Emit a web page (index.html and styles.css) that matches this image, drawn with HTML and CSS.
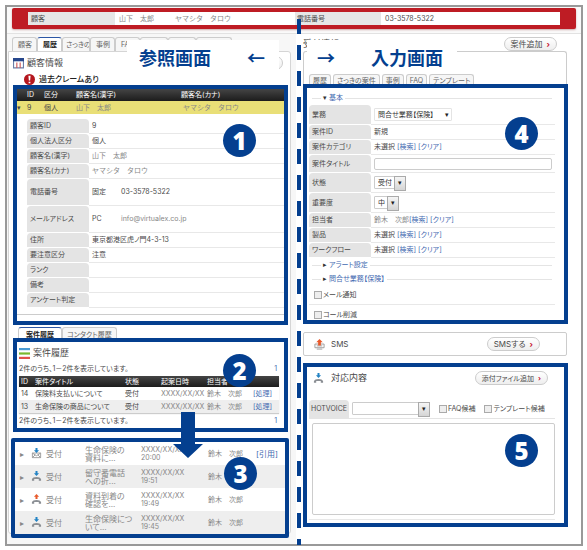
FILE: index.html
```html
<!DOCTYPE html>
<html lang="ja">
<head>
<meta charset="UTF-8">
<meta name="viewport" content="width=device-width, initial-scale=1.0">
<title>顧客対応画面</title>
<link rel="stylesheet" href="styles.css">
</head>
<body>
<!-- 共通アイコン -->
<svg class="defs" width="0" height="0">
  <symbol id="ico-phone" viewBox="0 0 12 12">
    <path class="handset" d="M1 10.500V9Q2 6.500 6 6.500T11 9v1.500H8.500V8.800h-5v1.700z"/>
    <path class="arrow" d="M4.900 0h2.200v2.500h1.700L6 5.500 3.200 2.500h1.700z"/>
  </symbol>
  <symbol id="ico-phone-out" viewBox="0 0 12 12">
    <path class="handset" d="M1 10.500V9Q2 6.500 6 6.500T11 9v1.500H8.500V8.800h-5v1.700z"/>
    <path class="arrow out" d="M4.900 5.500h2.200V3h1.700L6 0 3.200 3h1.700z"/>
  </symbol>
  <symbol id="ico-mail" viewBox="0 0 12 12">
    <path class="line" d="M1.500 5.500h9v5h-9zM1.500 5.500L6 8.500l4.500-3M1.500 10.500L4.500 7.500M10.500 10.500L7.500 7.500"/>
    <path class="arrow" d="M4.900 0h2.200v2.500h1.700L6 5.500 3.200 2.500h1.700z"/>
  </symbol>
  <symbol id="ico-sms" viewBox="0 0 12 12">
    <path class="line" d="M1 5.500h10v4H1zM3 7.500h6M3 11h6"/>
    <path class="arrow out" d="M4.500 7h3V3.500h2L6 0 2.500 3.500h2z"/>
  </symbol>
</svg>

<div class="frame">
  <header class="topbar">
    <dl class="caller">
      <dt>顧客</dt>
      <dd class="light">山下　太郎　　　ヤマシタ　タロウ</dd>
      <dt class="tel">電話番号</dt>
      <dd>03-3578-5322</dd>
    </dl>
  </header>

  <main class="columns">
    <!-- 参照画面 -->
    <section class="left">
      <h2 class="screen-title"><span>参照画面</span><span>←</span></h2>
      <nav class="tabs main-tabs">
        <a href="#">顧客</a>
        <a href="#" class="active">履歴</a>
        <a href="#">さっきの</a>
        <a href="#">事例</a>
        <a href="#">FAQ</a>
        <a href="#"></a>
        <a href="#"></a>
        <a href="#" class="wide"></a>
      </nav>
      <div class="panel">
        <div class="panel-head">
          <svg class="icon" viewBox="0 0 10 10"><path fill="#fff" stroke="#6b7fa8" d="M.5.500h9v8.500h-9z"/><path fill="#27478c" d="M0 0h10v3H0z"/><path stroke="#c55" d="M3.500 4v5M6.500 4v5"/></svg>
          <h3>顧客情報</h3>
          <button type="button" class="pill" aria-label="編集"></button>
        </div>
        <p class="warn">
          <svg class="icon" viewBox="0 0 10 10"><circle cx="5" cy="5" r="5" fill="#b5171e"/><path fill="#fff" d="M4 1.500h2L5.600 6H4.400zM4.200 7h1.600v1.500H4.200z"/></svg>
          過去クレームあり
        </p>

        <div class="box customer">
          <table class="list person">
            <thead><tr><th class="c-mark"></th><th class="c-id">ID</th><th class="c-kind">区分</th><th class="c-name">顧客名(漢字)</th><th>顧客名(カナ)</th></tr></thead>
            <tbody><tr><td>▾</td><td>9</td><td>個人</td><td class="light">山下　太郎</td><td class="light">&nbsp;ヤマシタ　タロウ</td></tr></tbody>
          </table>
          <div class="detail-wrap">
            <table class="detail">
              <tr><th>顧客ID</th><td>9</td></tr>
              <tr><th>個人法人区分</th><td>個人</td></tr>
              <tr><th>顧客名(漢字)</th><td class="light">山下　太郎</td></tr>
              <tr><th>顧客名(カナ)</th><td class="light">ヤマシタ　タロウ</td></tr>
              <tr class="tall"><th>電話番号</th><td><span class="sub">固定</span>03-3578-5322</td></tr>
              <tr class="tall"><th>メールアドレス</th><td><span class="sub">PC</span><span class="light">info@virtualex.co.jp</span></td></tr>
              <tr><th>住所</th><td>東京都港区虎ノ門4-3-13</td></tr>
              <tr><th>要注意区分</th><td>注意</td></tr>
              <tr><th>ランク</th><td></td></tr>
              <tr><th>備考</th><td></td></tr>
              <tr><th>アンケート判定</th><td></td></tr>
            </table>
          </div>
          <span class="badge">1</span>
        </div>

        <nav class="tabs sub-tabs">
          <a href="#" class="active">案件履歴</a>
          <a href="#">コンタクト履歴</a>
        </nav>
        <div class="box history">
          <div class="history-head">
            <svg class="icon" viewBox="0 0 10 10"><path fill="#4a9bd4" d="M0 0h10v2H0z"/><path fill="#7ab82e" d="M0 4h10v2H0z"/><path fill="#e0514b" d="M0 8h10v2H0z"/></svg>
            <h3>案件履歴</h3>
          </div>
          <p class="count"><span>2件のうち、1－2件を表示しています。</span><a href="#">1</a></p>
          <table class="list cases">
            <thead><tr><th class="c-no">ID</th><th class="c-title">案件タイトル</th><th class="c-state">状態</th><th class="c-date">起案日時</th><th class="c-staff">担当者</th><th></th></tr></thead>
            <tbody>
              <tr><td>14</td><td>保険料支払いについて</td><td>受付</td><td class="light">XXXX/XX/XX</td><td class="light">鈴木　次郎</td><td><a href="#">[処理]</a></td></tr>
              <tr><td>13</td><td>生命保険の商品について</td><td>受付</td><td class="light">XXXX/XX/XX</td><td class="light">鈴木　次郎</td><td><a href="#">[処理]</a></td></tr>
            </tbody>
          </table>
          <p class="count after"><span>2件のうち、1－2件を表示しています。</span><a href="#">1</a></p>
          <span class="badge">2</span>
          <svg class="down" viewBox="0 0 30 46"><path d="M8 0h14v32h8L15 46 0 32h8z"/></svg>
        </div>

        <div class="box contacts">
          <table>
            <tr><td class="c-mark">▸</td><td class="c-icon"><svg class="icon"><use href="#ico-mail"/></svg></td><td class="c-state">受付</td><td class="c-title">生命保険の<br>資料に...</td><td class="c-date">XXXX/XX/XX<br>20:00</td><td class="c-staff">鈴木　次郎</td><td><a href="#">[引用]</a></td></tr>
            <tr><td>▸</td><td><svg class="icon"><use href="#ico-phone"/></svg></td><td>受付</td><td>留守番電話<br>への折...</td><td>XXXX/XX/XX<br>19:51</td><td>鈴木　次郎</td><td></td></tr>
            <tr><td>▸</td><td><svg class="icon"><use href="#ico-phone-out"/></svg></td><td>受付</td><td>資料到着の<br>確認を...</td><td>XXXX/XX/XX<br>19:49</td><td>鈴木　次郎</td><td></td></tr>
            <tr><td>▸</td><td><svg class="icon"><use href="#ico-phone"/></svg></td><td>受付</td><td>生命保険につ<br>いて...</td><td>XXXX/XX/XX<br>19:45</td><td>鈴木　次郎</td><td></td></tr>
          </table>
          <span class="badge">3</span>
        </div>
      </div>
    </section>

    <!-- 入力画面 -->
    <section class="right">
      <h2 class="screen-title"><span>→</span><span>入力画面</span></h2>
      <div class="right-head">
        <h3>受付情報</h3>
        <button type="button" class="pill">案件追加<i>›</i></button>
      </div>
      <div class="case-panel">
        <nav class="tabs case-tabs">
          <a href="#">履歴</a>
          <a href="#">さっきの案件</a>
          <a href="#">事例</a>
          <a href="#">FAQ</a>
          <a href="#">テンプレート</a>
        </nav>
      </div>
      <form class="box case-form">
        <div class="rule"><span>▾</span><a href="#">基本</a></div>
        <table class="detail">
          <tr class="r-job"><th><label for="job">業務</label></th><td><span class="select flat"><select id="job"><option>問合せ業務【保険】</option></select></span></td></tr>
          <tr><th>案件ID</th><td>新規</td></tr>
          <tr><th>案件カテゴリ</th><td>未選択 <a href="#">[検索]</a> <a href="#">[クリア]</a></td></tr>
          <tr class="r-title"><th><label for="title">案件タイトル</label></th><td><input type="text" id="title"></td></tr>
          <tr class="r-select"><th><label for="state">状態</label></th><td><span class="select"><select id="state"><option>受付</option></select></span></td></tr>
          <tr class="r-select"><th><label for="level">重要度</label></th><td><span class="select"><select id="level"><option>中</option></select></span></td></tr>
          <tr><th>担当者</th><td><span class="light">鈴木　次郎</span><a href="#">[検索]</a> <a href="#">[クリア]</a></td></tr>
          <tr><th>製品</th><td>未選択 <a href="#">[検索]</a> <a href="#">[クリア]</a></td></tr>
          <tr><th>ワークフロー</th><td>未選択 <a href="#">[検索]</a> <a href="#">[クリア]</a></td></tr>
        </table>
        <div class="rule"><span>▸</span><a href="#">アラート設定</a></div>
        <div class="rule"><span>▸</span><a href="#">問合せ業務【保険】</a></div>
        <label class="check"><input type="checkbox">メール通知</label>
        <label class="check last"><input type="checkbox">コール削減</label>
        <span class="badge">4</span>
      </form>

      <div class="sms">
        <svg class="icon"><use href="#ico-sms"/></svg>
        <h3>SMS</h3>
        <button type="button" class="pill">SMSする<i>›</i></button>
      </div>

      <form class="box reply">
        <div class="reply-head">
          <svg class="icon"><use href="#ico-phone"/></svg>
          <h3>対応内容</h3>
          <button type="button" class="pill">添付ファイル追加<i>›</i></button>
        </div>
        <div class="voice">
          <label class="voice-label" for="voice">HOTVOICE</label>
          <span class="select wide"><select id="voice"><option></option></select></span>
          <label class="check"><input type="checkbox">FAQ候補</label>
          <label class="check"><input type="checkbox">テンプレート候補</label>
        </div>
        <div class="memo">
          <textarea aria-label="対応内容"></textarea>
        </div>
        <span class="badge">5</span>
      </form>
    </section>
  </main>
</div>
</body>
</html>
```

FILE: styles.css
```css
* {
  box-sizing: border-box;
}
body {
  margin: 5px 4px 0 5px;
  background: #fff;
  color: #4a4a4a;
  font-family: Inter, "Noto Sans CJK JP", sans-serif;
  font-size: 7px;
  line-height: 10px;
  font-feature-settings: "palt";
}
h2, h3, p, dl, dd {
  margin: 0;
}
h3 {
  font-size: 9px;
  font-weight: normal;
}
a {
  color: #3f69b0;
  text-decoration: none;
}
table {
  width: 100%;
  border-collapse: collapse;
}
th, td {
  padding: 0;
  text-align: left;
  font-weight: normal;
}
button, input, select, textarea {
  margin: 0;
  font: inherit;
  color: inherit;
  font-feature-settings: inherit;
}
.defs {
  position: absolute;
}
.light {
  color: #888;
  font-feature-settings: normal;
}
.icon {
  display: block;
  flex: none;
  width: 11px;
  height: 11px;
}
.handset {
  fill: #8b8f94;
}
.line {
  fill: none;
  stroke: #999;
}
.arrow {
  fill: #2383c4;
}
.arrow.out {
  fill: #e8592b;
}

/* 外枠 */
.frame {
  position: relative;
  border: 2px solid #999;
  background: #fff;
}
.frame::after {
  content: "";
  position: absolute;
  top: 12px;
  bottom: -1px;
  left: 290px;
  width: 4px;
  background: repeating-linear-gradient(#043f8f 0 15px, transparent 15px 26px);
}
.topbar {
  padding: 1px 5px 4px;
  border-bottom: 1px solid #e2e2e2;
  background: #fafafa;
}
.caller {
  display: grid;
  grid-template-columns: 87fr 180fr 86fr 179fr;
  padding: 4px 16px;
  border-radius: 2px;
  background: #be1c24;
  box-shadow: 0 1px 2px #caa;
  line-height: 13px;
}
.caller dt {
  padding-left: 3px;
  background: #e6e6e6;
}
.caller dt.tel {
  padding-left: 2px;
}
.caller dd {
  padding-left: 4px;
  background: #fff;
}
.columns {
  display: grid;
  grid-template-columns: 289fr 285fr;
}
.left {
  position: relative;
  padding: 3px 5px 10px 1px;
  background: #f7f7f7;
}
.right {
  position: relative;
  padding: 3px 13px 0 7px;
}

/* 画面名ラベル */
.screen-title {
  position: absolute;
  z-index: 2;
  display: flex;
  align-items: center;
  justify-content: space-between;
  top: 6px;
  height: 34px;
  background: #fff;
  color: #043f8f;
  font-family: "Noto Sans CJK JP", sans-serif;
  font-size: 18px;
  font-feature-settings: normal;
}
.left .screen-title {
  left: 120px;
  width: 152px;
  padding: 0 14px 0 12px;
}
.right .screen-title {
  left: 11px;
  width: 150px;
  padding: 0 14px 0 10px;
}

/* タブ */
.tabs {
  display: flex;
}
.tabs a {
  padding: 0 5px;
  border: 1px solid #ccc;
  border-bottom: 0;
  border-radius: 3px 3px 0 0;
  background: #f6f6f6;
  color: #666;
  white-space: nowrap;
  overflow: hidden;
}
.tabs a.active {
  border-top-color: #2b56a5;
  background: #fff;
  color: #222;
  font-weight: bold;
}
.main-tabs {
  padding-left: 4px;
}
.main-tabs a {
  width: 25px;
  height: 14px;
  line-height: 14px;
}
.main-tabs a:nth-child(3) {
  width: 28px;
  padding: 0 3px;
}
.main-tabs a:nth-child(n+6) {
  width: 28px;
}
.main-tabs a.wide {
  width: 36px;
}
.sub-tabs {
  margin-top: 2px;
  padding-left: 5px;
}
.sub-tabs a {
  height: 11px;
  padding: 0 7px;
  line-height: 14px;
}
.sub-tabs a + a {
  padding: 0 4px;
}
.case-tabs {
  gap: 2px;
  padding-left: 5px;
}
.case-tabs a {
  height: 10px;
  padding: 0 3px;
  line-height: 12px;
}

/* 左側 */
.panel {
  padding: 4px 2px 0 4px;
  border: 1px solid #d5d5d5;
  border-radius: 0 3px 3px 3px;
  background: #fff;
}
.panel-head {
  display: flex;
  align-items: center;
  gap: 3px;
  height: 14px;
}
.panel-head .pill {
  width: 40px;
  margin: 0 5px 0 auto;
}
.warn {
  display: flex;
  align-items: center;
  gap: 4px;
  height: 12px;
  margin-top: 3px;
  padding-left: 11px;
  color: #222;
  font-size: 8px;
  font-weight: 500;
}
.pill {
  height: 14px;
  padding: 0 6px;
  border: 1px solid #ccc;
  border-radius: 7px;
  background: linear-gradient(#fff, #eee);
  font-size: 8px;
  line-height: 11px;
  white-space: nowrap;
}
.pill i {
  margin-left: 4px;
  color: #c8102e;
  font-style: normal;
  font-weight: bold;
}
.box {
  position: relative;
  border: 4px solid #043f8f;
  background: #fff;
}
.badge {
  position: absolute;
  z-index: 1;
  right: 26px;
  width: 33px;
  height: 33px;
  border-radius: 50%;
  background: #043f8f;
  color: #fff;
  font-family: "Open Sans", sans-serif;
  font-size: 24px;
  font-weight: 800;
  line-height: 33px;
  text-align: center;
}
.left .badge {
  right: 28px;
}
.customer .badge {
  top: 35px;
}
.history .badge {
  top: 12px;
}
.contacts .badge {
  top: 15px;
}
.case-form .badge {
  top: 29px;
}
.reply .badge {
  top: 67px;
}
.customer {
  padding-bottom: 6px;
}
.list {
  table-layout: fixed;
}
.list th {
  color: #fff;
}
.list thead tr {
  background: linear-gradient(#444, #1c1c1c);
}
.person th {
  height: 12px;
}
.person td {
  height: 13px;
  background: #e9df77;
}
.person .c-mark {
  width: 10px;
}
.person .c-id {
  width: 17px;
}
.person .c-kind {
  width: 32px;
}
.person .c-name {
  width: 105px;
}
.detail-wrap {
  padding: 5px 0 6px 10px;
  border-bottom: 1px solid #ccc;
}
.detail {
  border-collapse: separate;
  border-spacing: 0;
}
.detail th {
  width: 62px;
  height: 15px;
  padding-left: 3px;
  border-bottom: 1px solid #fff;
  border-radius: 4px 4px 0 0;
  background: #e4e4e4;
  background-clip: padding-box;
}
.detail td {
  padding-left: 3px;
  border-bottom: 1px solid #e8e8e8;
}
.detail .tall th {
  height: 27px;
}
.sub {
  display: inline-block;
  width: 29px;
}
.history {
  padding: 0 5px 2px 2px;
}
.history-head {
  display: flex;
  align-items: center;
  gap: 3px;
  height: 22px;
}
.count {
  display: flex;
  justify-content: space-between;
  padding-right: 2px;
}
.count.after {
  margin-top: 3px;
}
.cases {
  margin-top: 2px;
  box-shadow: 0 1px 1px #ccc;
}
.cases th {
  height: 11px;
}
.cases td {
  height: 13px;
}
.cases tbody tr:nth-child(2) {
  background: #eee;
}
.cases .c-no {
  width: 16px;
}
.cases th:first-child, .cases td:first-child {
  padding-left: 2px;
}
.cases .c-title {
  width: 90px;
}
.cases .c-state {
  width: 36px;
}
.cases .c-date {
  width: 46px;
}
.cases .c-staff {
  width: 46px;
}
.down {
  position: absolute;
  z-index: 1;
  top: 70px;
  left: 156px;
  width: 30px;
  height: 46px;
  fill: #043f8f;
}
.contacts {
  margin: 6px -1px -5px -2px;
  border-radius: 2px;
}
.contacts table {
  table-layout: fixed;
  color: #888;
  font-size: 8px;
  line-height: 8px;
}
.contacts td {
  height: 23px;
}
.contacts tr:nth-child(even) {
  background: #eee;
}
.contacts .c-mark {
  width: 16px;
}
.contacts td:first-child {
  padding-left: 5px;
}
.contacts .c-icon {
  width: 15px;
}
.contacts .c-state {
  width: 39px;
}
.contacts .c-title {
  width: 56px;
}
.contacts .c-date {
  width: 67px;
}
.contacts .c-staff {
  width: 48px;
}
.contacts td:nth-child(5), .contacts td:nth-child(6) {
  font-size: 7px;
}

/* 右側 */
.right-head {
  display: flex;
  justify-content: space-between;
  align-items: center;
  height: 14px;
  padding-right: 11px;
}
.case-panel {
  height: 33px;
  margin-right: 1px;
  padding-top: 22px;
  border: 1px solid #ccc;
  border-bottom: 0;
  border-radius: 3px 3px 0 0;
}
.case-form {
  padding: 3px 9px 0 2px;
}
.rule {
  display: flex;
  align-items: center;
  gap: 2px;
  height: 14px;
  margin: 0 3px;
  color: #333;
}
.rule::before, .rule::after {
  content: "";
  flex: 1;
  height: 1px;
  background: #e4e4e4;
}
.rule::before {
  flex: none;
  width: 9px;
}
.case-form .r-job th {
  height: 20px;
}
.case-form .r-title th {
  height: 18px;
}
.case-form .r-select th {
  height: 20px;
}
input[type="text"] {
  display: block;
  width: 178px;
  max-width: 100%;
  height: 12px;
  border: 1px solid #ccc;
  border-radius: 2px;
}
.select {
  position: relative;
  display: inline-block;
  vertical-align: middle;
}
.select select {
  display: block;
  height: 13px;
  padding: 0 13px 0 3px;
  border: 1px solid #ccc;
  border-radius: 1px;
  background: #fff;
  appearance: none;
  color: #333;
  line-height: 11px;
}
.select::after {
  content: "▾";
  position: absolute;
  top: 0;
  right: 0;
  width: 10px;
  height: 13px;
  border: 1px solid #aaa;
  background: linear-gradient(#f5f5f5, #d5d5d5);
  color: #222;
  line-height: 11px;
  text-align: center;
  pointer-events: none;
}
.select.flat::after {
  border: 0;
  background: none;
  line-height: 13px;
}
.select.flat select {
  width: 78px;
  border-color: #e4e4e4;
}
.select.wide select {
  width: 78px;
}
.check {
  display: flex;
  align-items: center;
  gap: 1px;
}
.check input {
  appearance: none;
  width: 8px;
  height: 8px;
  border: 1px solid #aaa;
  background: #eee;
}
.case-form .check {
  height: 19px;
  padding-left: 5px;
  border-bottom: 1px solid #e8e8e8;
}
.case-form .check.last {
  height: 15px;
  padding-top: 4px;
  border-bottom: 0;
}
.sms {
  display: flex;
  align-items: center;
  gap: 6px;
  height: 24px;
  margin: 8px 1px 7px 0;
  padding: 0 26px 0 10px;
  border: 1px solid #ccc;
  border-radius: 2px;
}
.sms h3 {
  font-size: 8px;
}
.sms .pill, .reply .pill {
  margin-left: auto;
}
.reply {
  padding: 3px 9px 3px 2px;
}
.reply-head {
  display: flex;
  align-items: center;
  gap: 7px;
  height: 16px;
  padding: 0 7px 0 4px;
}
.reply-head .pill {
  padding: 0 6px;
  font-size: 7px;
}
.voice {
  display: flex;
  align-items: center;
  height: 20px;
  margin-top: 13px;
  border-bottom: 1px solid #e4e4e4;
}
.voice-label {
  width: 40px;
  margin-right: 3px;
  padding-left: 2px;
  border-radius: 4px 4px 0 0;
  background: #e4e4e4;
  line-height: 18px;
  white-space: nowrap;
}
.voice .check {
  margin-left: 9px;
  white-space: nowrap;
}
.memo {
  padding: 4px 0 4px 3px;
  border-bottom: 1px solid #e8e8e8;
}
textarea {
  display: block;
  width: 100%;
  height: 92px;
  border: 1px solid #ccc;
  border-radius: 2px;
  resize: none;
}
```
